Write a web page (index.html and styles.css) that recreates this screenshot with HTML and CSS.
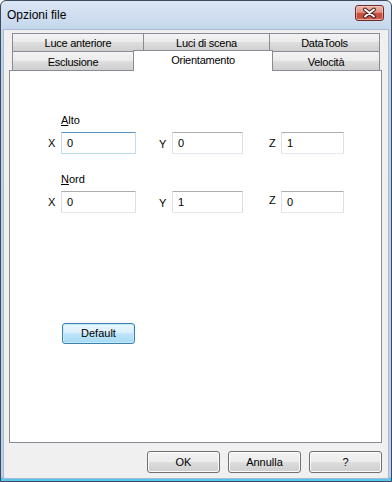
FILE: index.html
```html
<!DOCTYPE html>
<html lang="it">
<head>
<meta charset="utf-8">
<title>Opzioni file</title>
<link rel="stylesheet" href="styles.css">
</head>
<body>
<div class="window">
  <div class="titlebar">
    <span class="title">Opzioni file</span>
    <div class="close">
      <svg width="27" height="14" viewBox="0 0 27 14">
        <g stroke-linecap="round">
          <path d="M9 3.5 L18 10.5 M18 3.5 L9 10.5" stroke="#4a1a1a" stroke-width="4"/>
          <path d="M9 3.5 L18 10.5 M18 3.5 L9 10.5" stroke="#ffffff" stroke-width="2"/>
        </g>
      </svg>
    </div>
  </div>
  <div class="client">
    <div class="tabs">
      <div class="tabrow">
        <div class="tab back t1">Luce anteriore</div>
        <div class="tab back t2">Luci di scena</div>
        <div class="tab back t3 last">DataTools</div>
      </div>
      <div class="tabrow">
        <div class="tab front t4">Esclusione</div>
        <div class="tab sel">Orientamento</div>
        <div class="tab front t6 last">Velocità</div>
      </div>
    </div>
    <div class="panel">
      <div class="group">
        <div class="caption"><u>A</u>lto</div>
        <div class="fields">
          <span class="axis">X</span><div class="input focus">0</div>
          <span class="axis gap low">Y</span><div class="input wy">0</div>
          <span class="axis gap2 zl">Z</span><div class="input wz">1</div>
        </div>
      </div>
      <div class="group second">
        <div class="caption"><u>N</u>ord</div>
        <div class="fields">
          <span class="axis">X</span><div class="input">0</div>
          <span class="axis gap low">Y</span><div class="input wy">1</div>
          <span class="axis gap2 zl high">Z</span><div class="input wz">0</div>
        </div>
      </div>
      <div class="btn default">Default</div>
    </div>
    <div class="buttons">
      <div class="btn">OK</div>
      <div class="btn">Annulla</div>
      <div class="btn">?</div>
    </div>
  </div>
</div>
</body>
</html>
```

FILE: styles.css
```css
* { box-sizing: border-box; }

html, body {
  margin: 0;
  padding: 0;
  background: #ffffff;
}

body {
  font-family: "Liberation Sans", Arial, sans-serif;
  font-size: 11px;
  color: #000000;
}

.window {
  width: 392px;
  height: 482px;
  border: 1px solid #3d4a5b;
  border-radius: 6px 6px 0 0;
  padding: 0 3px 3px 3px;
  background: linear-gradient(to bottom,
    #dbe6f4 0px,
    #c6d7ec 28px,
    #bfd2ea 60px,
    #bcd0e9 calc(100% - 4px),
    #4cc2ec calc(100% - 3px),
    #5ccaf0 100%);
  display: flex;
  flex-direction: column;
}

.titlebar {
  height: 29px;
  display: flex;
  align-items: flex-start;
  flex: none;
}

.title {
  font-size: 12px;
  line-height: 14px;
  margin-top: 7px;
  margin-left: 3px;
  color: #000000;
}

.close {
  margin-left: auto;
  margin-top: 4px;
  margin-right: 4px;
  width: 29px;
  height: 16px;
  border: 1px solid #6e2a2a;
  border-radius: 3px;
  background: linear-gradient(to bottom,
    #eeb3a5 0%,
    #dd9484 45%,
    #c9523f 52%,
    #c24b3d 80%,
    #d67b68 100%);
  box-shadow: inset 0 0 0 1px rgba(255, 220, 210, 0.5);
  display: flex;
  align-items: center;
  justify-content: center;
}

.close svg { display: block; }

.client {
  height: 448px;
  background: #f0f0f0;
  padding: 3px 6px 0 5px;
  box-shadow: 0 0 0 1px #a6bad3;
}

.tabs {
  margin: 0 2px 0 3px;
}

.tabrow {
  display: flex;
  align-items: flex-start;
}

.tab {
  border-top: 1px solid #898c95;
  border-left: 1px solid #898c95;
  text-align: center;
  line-height: 14px;
  letter-spacing: -0.25px;
  white-space: nowrap;
  background: linear-gradient(to bottom,
    #f3f3f3 0%,
    #ebebeb 50%,
    #dedede 50%,
    #cfcfcf 100%);
}

.tab.last { border-right: 1px solid #898c95; }

.back {
  height: 18px;
  padding-top: 2px;
}

.front {
  height: 19px;
  padding-top: 3px;
}

.t1 { width: 131px; }
.t2 { width: 126px; }
.t3 { width: 111px; }
.t4 { width: 121px; }
.t6 { width: 107px; border-left: none; }

.sel {
  width: 140px;
  height: 21px;
  margin-top: -1px;
  margin-bottom: -1px;
  padding-top: 2px;
  border-right: 1px solid #898c95;
  background: #ffffff;
  position: relative;
  z-index: 1;
}

.panel {
  height: 373px;
  border: 1px solid #898c95;
  background: #ffffff;
  padding: 43px 0 0 37px;
}

.group.second { margin-top: 19px; }

.caption {
  margin-left: 14px;
  line-height: 13px;
  height: 13px;
}

.caption u { text-decoration-thickness: 1px; text-underline-offset: 1px; }

.fields {
  display: flex;
  align-items: center;
  margin-top: 5px;
  height: 22px;
}

.axis {
  width: 14px;
  padding-left: 1px;
  line-height: 13px;
}

.axis.gap { margin-left: 22px; }
.axis.gap2 { margin-left: 25px; }
.axis.zl { width: 13px; }
.axis.low { padding-top: 3px; }
.axis.high { padding-bottom: 4px; }

.input {
  width: 75px;
  height: 22px;
  padding-left: 5px;
  line-height: 20px;
  border: 1px solid #dde1e7;
  border-top-color: #abadb3;
  border-bottom-color: #e3e9ef;
  background: #ffffff;
  border-radius: 1px;
}

.input.wy { width: 71px; }
.input.wz { width: 63px; }

.input.focus {
  border-color: #b7d9ed;
  border-top-color: #5794bf;
  border-left-color: #c5daed;
  border-right-color: #c5daed;
}

.btn {
  width: 73px;
  height: 22px;
  border: 1px solid #707070;
  border-radius: 3px;
  background: linear-gradient(to bottom,
    #f2f2f2 0%,
    #ebebeb 50%,
    #dddddd 50%,
    #cfcfcf 100%);
  box-shadow: inset 0 0 0 1px #fbfbfb;
  display: flex;
  align-items: center;
  justify-content: center;
  line-height: 13px;
}

.btn.default {
  height: 21px;
  margin-top: 110px;
  margin-left: 15px;
  border-color: #3c7fb1;
  background: linear-gradient(to bottom,
    #eaf6fd 0%,
    #d9f0fc 50%,
    #bee6fd 50%,
    #a7d9f5 100%);
  box-shadow: inset 0 0 0 1px #c4ecfd;
}

.buttons {
  display: flex;
  justify-content: flex-end;
  gap: 8px;
  margin-top: 8px;
}
```
